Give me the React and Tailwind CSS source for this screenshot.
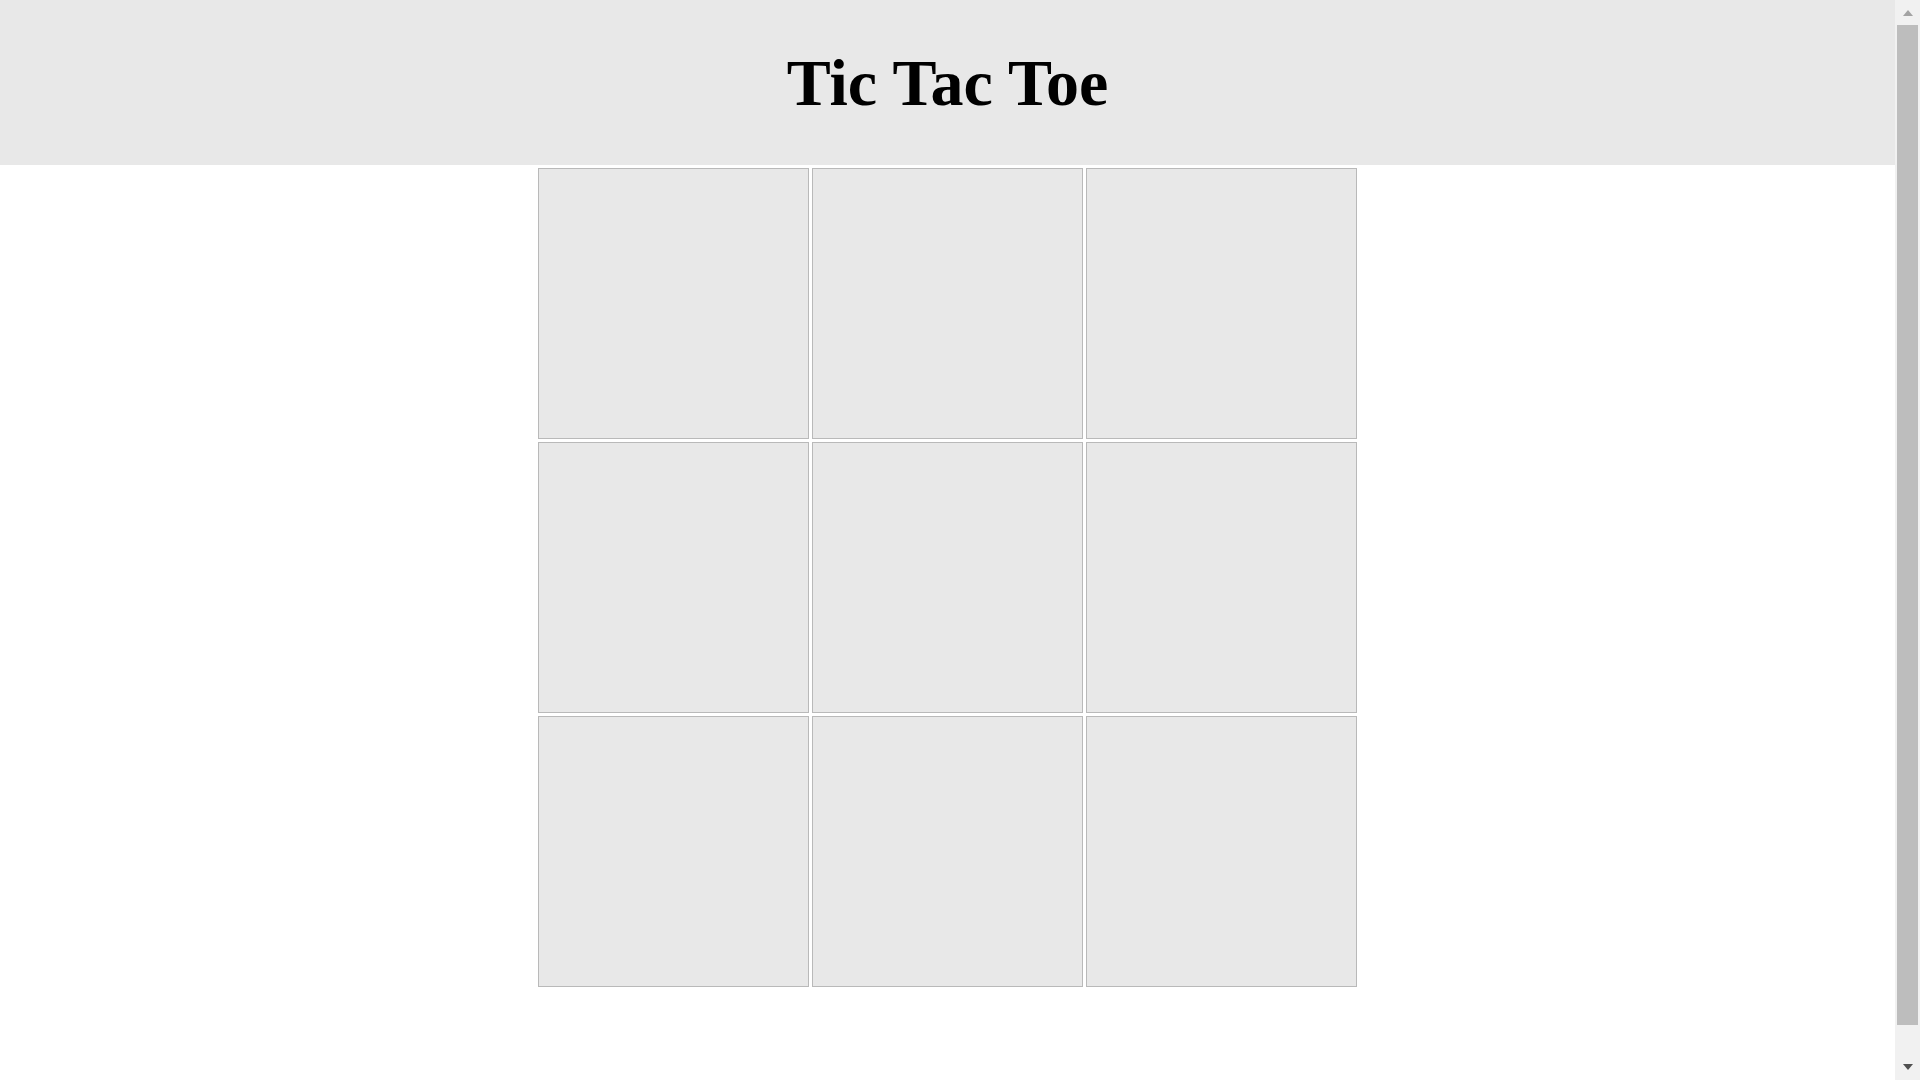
import React, { useState } from 'react';

const Cell = ({ value, onClick }) => (
    <button
        type="button"
        onClick={onClick}
        className="w-[271px] h-[271px] bg-[#e8e8e8] border border-[#b9b9b9] text-[120px] font-bold leading-none"
    >
        {value}
    </button>
);

// fake page scrollbar, like the one in the screenshot
const ScrollBar = () => (
    <aside className="w-[25px] h-screen bg-[#f1f1f1] flex flex-col shrink-0">
        <div className="h-[25px] flex items-start justify-center pt-[10px]">
            <div className="w-0 h-0 border-x-[5.5px] border-x-transparent border-b-[6px] border-b-[#a3a3a3]" />
        </div>
        <div className="h-[1000px] mx-[2px] bg-[#bdbdbd]" />
        <div className="flex-1 flex items-end justify-center pb-[10px]">
            <div className="w-0 h-0 border-x-[5.5px] border-x-transparent border-t-[6px] border-t-[#505050]" />
        </div>
    </aside>
);

const App = () => {
    const [board, setBoard] = useState(Array(9).fill(null));
    const [xNext, setXNext] = useState(true);

    const handleClick = (i) => {
        if (board[i]) return;
        const next = board.slice();
        next[i] = xNext ? 'X' : 'O';
        setBoard(next);
        setXNext(!xNext);
    };

    return (
        <div className="h-screen flex overflow-hidden bg-white" style={{ fontFamily: '"Liberation Serif", serif' }}>
            <main className="flex-1">
                <header className="h-[165px] bg-[#e8e8e8] flex items-center justify-center">
                    <h1 className="text-[66px] font-bold text-black leading-[1.107]">Tic Tac Toe</h1>
                </header>

                <div className="w-[819px] mx-auto mt-[3px] grid grid-cols-[repeat(3,271px)] gap-[3px]">
                    {board.map((v, i) => (
                        <Cell key={i} value={v} onClick={() => handleClick(i)} />
                    ))}
                </div>
            </main>
            <ScrollBar />
        </div>
    );
};

export default App;
